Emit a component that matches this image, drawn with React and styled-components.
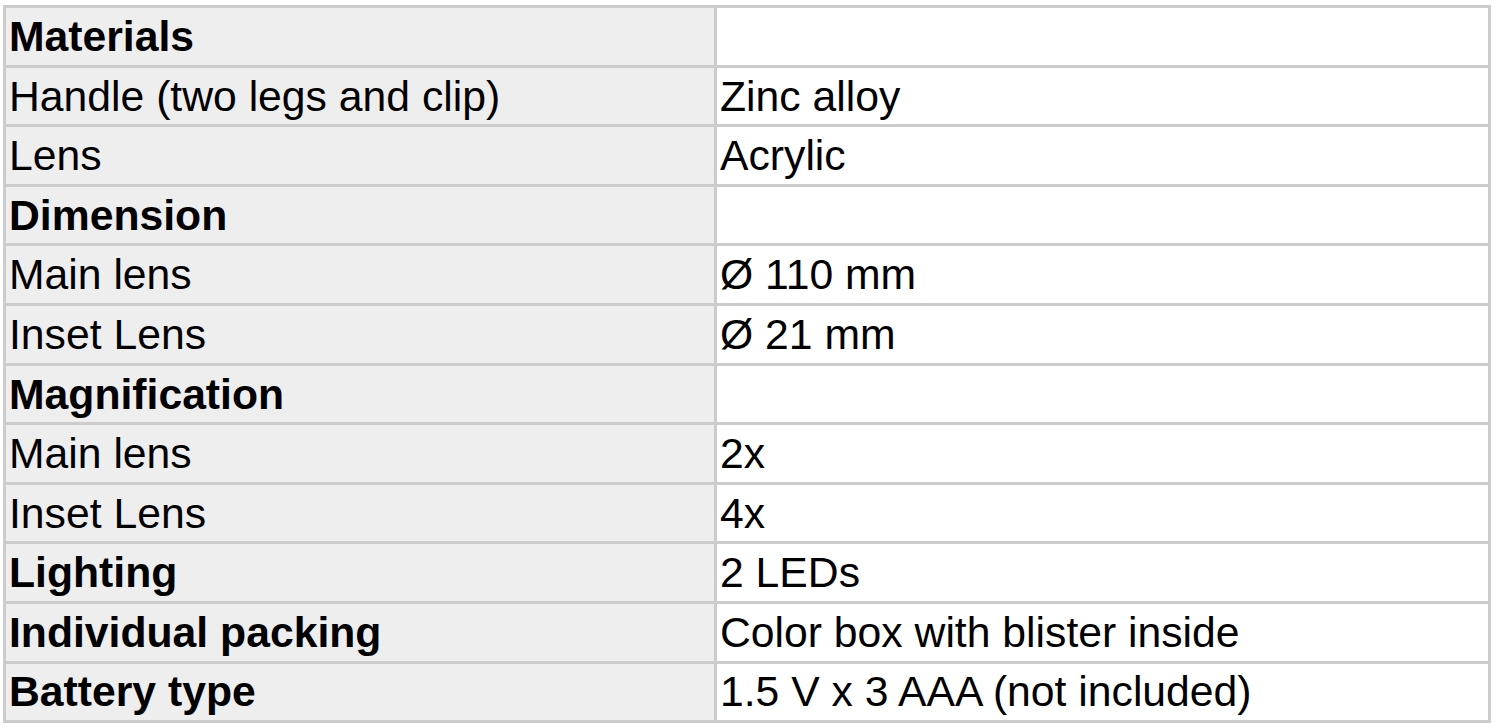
import React from "react";
import styled, { createGlobalStyle } from "styled-components";

const GlobalStyle = createGlobalStyle`
  html, body {
    margin: 0;
    padding: 0;
    background: #ffffff;
  }
`;

const rows = [
  { label: "Materials", value: "", head: true },
  { label: "Handle (two legs and clip)", value: "Zinc alloy" },
  { label: "Lens", value: "Acrylic" },
  { label: "Dimension", value: "", head: true },
  { label: "Main lens", value: "Ø 110 mm" },
  { label: "Inset Lens", value: "Ø 21 mm" },
  { label: "Magnification", value: "", head: true },
  { label: "Main lens", value: "2x" },
  { label: "Inset Lens", value: "4x" },
  { label: "Lighting", value: "2 LEDs", head: true },
  { label: "Individual packing", value: "Color box with blister inside", head: true },
  { label: "Battery type", value: "1.5 V x 3 AAA (not included)", head: true },
];

const SpecTable = () => (
  <>
    <GlobalStyle />
    <Table>
      <colgroup>
        <col style={{ width: 711 }} />
        <col style={{ width: 774 }} />
      </colgroup>
      <tbody>
        {rows.map((r, i) => (
          <Row key={i}>
            <Label $head={r.head}>{r.label}</Label>
            <Value>{r.value}</Value>
          </Row>
        ))}
      </tbody>
    </Table>
  </>
);

const Table = styled.table`
  margin: 5px 0 0 3px;
  width: 1488px;
  table-layout: fixed;
  border-collapse: separate;
  border-spacing: 0;
  border-top: 3px solid #cccccc;
  border-left: 3px solid #cccccc;
  font-family: "Liberation Sans", Arial, sans-serif;
  font-size: 42.7px;
  color: #000000;
`;

const Row = styled.tr`
  height: 59.6px;
`;

const Cell = styled.td`
  box-sizing: border-box;
  padding: 0 0 0 3px;
  border-right: 3px solid #cccccc;
  border-bottom: 3px solid #cccccc;
  vertical-align: middle;
  white-space: nowrap;
  line-height: 1;
  overflow: hidden;
`;

const Label = styled(Cell)`
  background: #eeeeee;
  font-weight: ${(p) => (p.$head ? 700 : 400)};
`;

const Value = styled(Cell)`
  background: #ffffff;
`;

export default SpecTable;
